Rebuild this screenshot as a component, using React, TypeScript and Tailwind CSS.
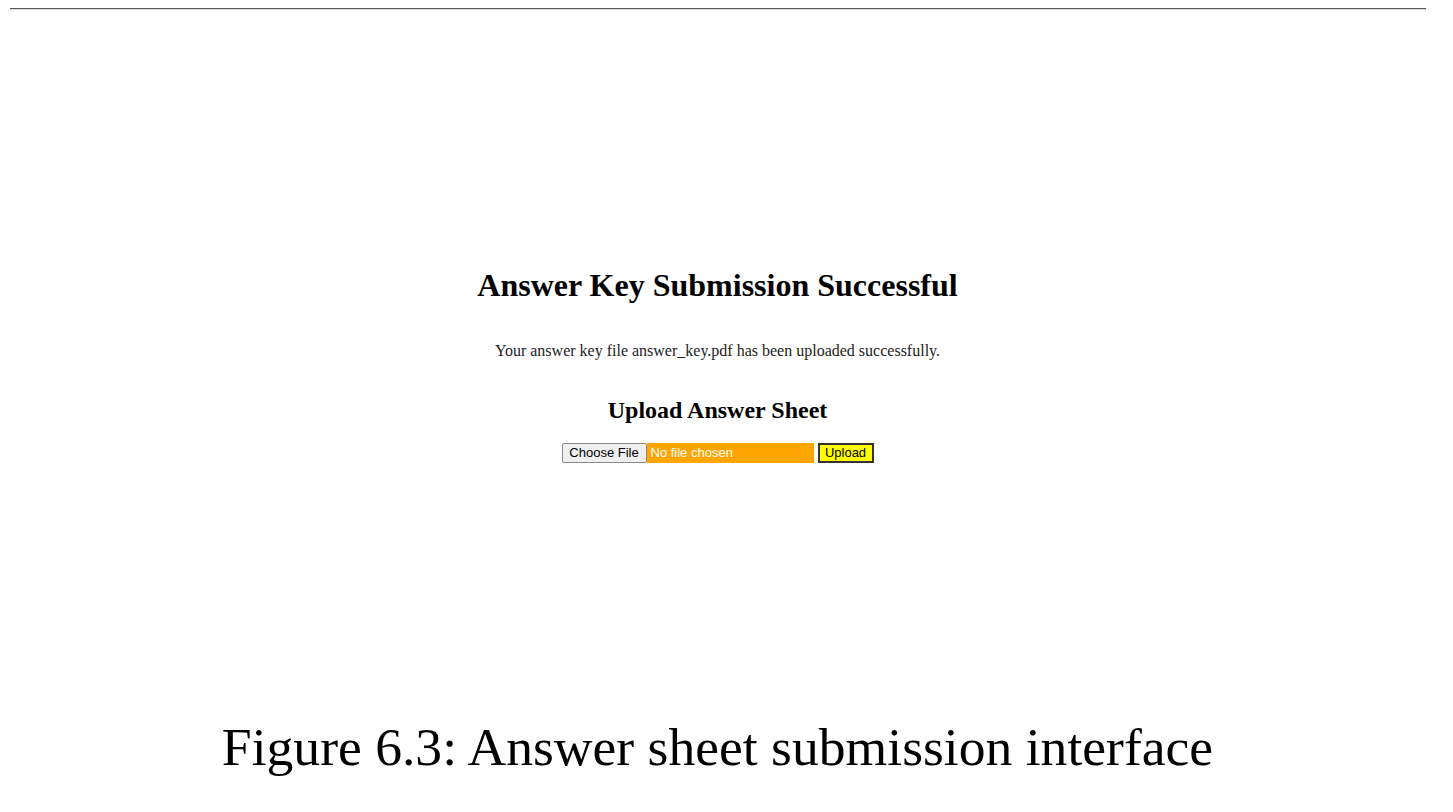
export default function App() {
  return (
    <div className="w-[1453px] h-[812px] bg-white relative overflow-hidden" style={{ fontFamily: '"Liberation Serif", serif' }}>
      <div className="pt-[8px] pl-[10px] pr-[27px]">
        <div className="h-[1px] bg-[#555555]" />
        <div className="h-[1px] bg-[#dddddd]" />
      </div>
      <div className="flex flex-col items-center pt-[255px] pr-[18px]">
        <h1 className="text-[32px] font-bold leading-[40px] text-black">Answer Key Submission Successful</h1>
        <p className="text-[16px] leading-[20px] text-[#222] mt-[36px]">Your answer key file answer_key.pdf has been uploaded successfully.</p>
        <h2 className="text-[24px] font-bold leading-[30px] text-black mt-[34px]">Upload Answer Sheet</h2>
        <div className="flex items-center mt-[18px]" style={{ fontFamily: '"Liberation Sans", Arial, sans-serif' }}>
          <div className="flex items-center h-[20px]">
            <span className="h-[20px] w-[85px] border border-[#8a8a8a] bg-[#efefef] rounded-[2px] text-[13px] text-black flex items-center justify-center">Choose File</span>
            <span className="h-[20px] w-[167px] bg-[#ffa500] text-white text-[13px] flex items-center pl-[4px]">No file chosen</span>
          </div>
          <span className="ml-[4px] h-[20px] w-[56px] bg-[#ffff00] border-2 border-[#333] text-[13px] text-black flex items-center justify-center">Upload</span>
        </div>
      </div>
      <div className="absolute left-0 right-0 top-[715px] flex justify-center pr-[18px]">
        <span className="text-[53.6px] leading-[64px] text-black">Figure 6.3: Answer sheet submission interface</span>
      </div>
    </div>
  );
}
